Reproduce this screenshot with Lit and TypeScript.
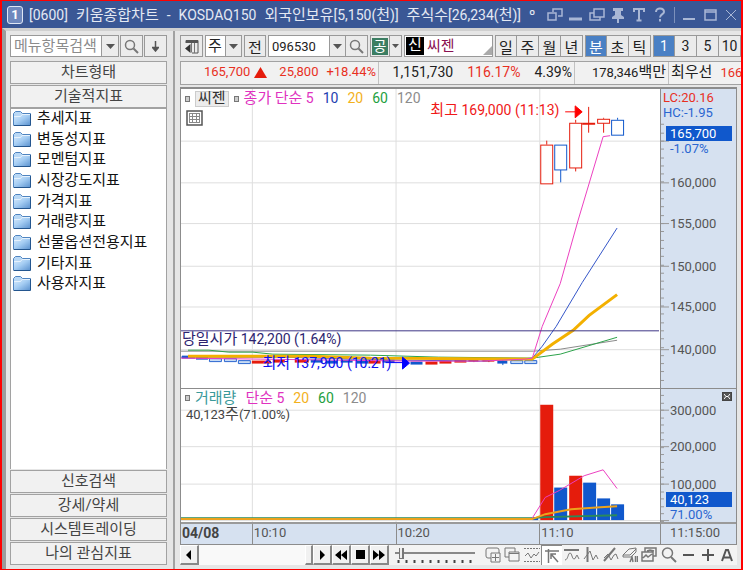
import { LitElement, html, svg, css } from "lit";
import { customElement } from "lit/decorators.js";
import { classMap } from "lit/directives/class-map.js";

/** Wraps runs of Hangul so they can be set larger than digits and Latin. */
const mix = (text: string) =>
  text
    .split(/([\uAC00-\uD7A3]+)/)
    .filter((t) => t)
    .map((t) => (/[\uAC00-\uD7A3]/.test(t) ? html`<span class="ko">${t}</span>` : t));

const shared = css`
  * { box-sizing: border-box; }
  button, input, select {
    font: inherit;
    color: inherit;
    margin: 0;
    padding: 0;
    border-radius: 0;
    appearance: none;
    outline: none;
  }
  button, select { cursor: pointer; }
  button { display: flex; align-items: center; justify-content: center; white-space: nowrap; }
  svg { display: block; flex: none; }
  .ko { font-size: 15px; }
`;

const arrow = html`<svg width="9" height="5" viewBox="0 0 9 5"><path d="M0 0h9L4.500 5z" fill="#555"/></svg>`;
const lens = html`<svg width="15" height="15" viewBox="0 0 15 15" fill="none" stroke="#777">
  <circle cx="6" cy="6" r="4.500" stroke-width="1.500"/><path d="M9.500 9.500L14 14" stroke-width="2"/></svg>`;

@customElement("title-bar")
class TitleBar extends LitElement {
  static styles = [shared, css`
    :host {
      display: flex; align-items: center; height: 27px; padding: 0 0 0 5px;
      background: #3a5795; color: #e4e9f3; overflow: hidden;
    }
    .badge {
      width: 16px; height: 18px; margin-right: 6px; flex: none;
      border: 1px solid #dfe6f4; border-radius: 3px; background: #6f88bd;
      color: #fff; font-weight: 700; font-size: 13px; line-height: 16px; text-align: center;
    }
    .title { display: flex; align-items: baseline; gap: 8px; flex: 1; white-space: nowrap; min-width: 0; overflow: hidden; font-size: 14px; line-height: 24px; }
    .tools { display: flex; flex: none; }
    .tools button { width: 21px; height: 22px; border: 0; background: none; color: #a9b7d5; }
    .rule { width: 1px; height: 16px; background: #7c90bb; margin: 3px 3px 0 4px; }
  `];
  render() {
    const parts = ["[0600]", "키움종합차트", "-", "KOSDAQ150", "외국인보유[5,150(천)]", "주식수[26,234(천)]", "º"];
    const tool = (label: string, art: unknown) => html`<button aria-label=${label}>
      <svg width="16" height="16" viewBox="0 0 16 16" fill="none" stroke="currentColor" stroke-width="1.500">${art}</svg></button>`;
    return html`
      <span class="badge">1</span>
      <div class="title">${parts.map((p) => html`<span>${mix(p)}</span>`)}</div>
      <div class="tools">
        ${tool("연결", svg`<path d="M6 5V2h9v7h-4M1 6h8v7H1z"/>`)}
        ${tool("내리기", svg`<path d="M1 12h13" stroke-width="3"/>`)}
        ${tool("복사", svg`<path d="M5 2h10v8H5zM5 6H1v7h10v-3"/>`)}
        ${tool("고정", svg`<path d="M3 1h10v3h-2v4l3 2v2H2v-2l3-2V4H3zM7 12h2v4H7z" fill="currentColor" stroke="none"/>`)}
        ${tool("글꼴", svg`<path d="M3 5V2h10v3M8 2v11M5.500 13.500h5" stroke-width="2"/>`)}
        ${tool("도움말", svg`<path d="M4 5c0-5 8-4.500 8 0 0 2-4 2.500-4 5.500M8 12v2.500" stroke-width="2"/>`)}
        <span class="rule"></span>
        ${tool("최소화", svg`<path d="M2 12h12" stroke-width="2"/>`)}
        ${tool("최대화", svg`<path d="M3 3h11v10H3zM3 5h11"/>`)}
        ${tool("닫기", svg`<path d="M3 3l10 10M13 3L3 13" stroke-width="1"/>`)}
      </div>`;
  }
}

@customElement("side-menu")
class SideMenu extends LitElement {
  static styles = [shared, css`
    :host { display: flex; flex-direction: column; gap: 1px; font-size: 15px; line-height: 20px; color: #444; }
    .search { display: flex; height: 22px; margin-bottom: 3px; flex: none; }
    .search input { flex: 1; min-width: 0; padding: 0 3px; border: 1px solid #999; background: #fff; }
    .search input::placeholder { color: #8c8c8c; opacity: 1; }
    .search button { background: #ececec; border: 1px solid #999; }
    .pick { width: 17px; border-left: 0 !important; }
    .find, .down { width: 23px; margin-left: 1px; }
    .head { height: 23px; flex: none; border: 1px solid #a2a2a2; background: #f1f1f1; padding-bottom: 1px; }
    .tree { flex: 1; min-height: 190px; margin: -1px 0 0; background: #fff; border: solid #a2a2a2; border-width: 1px 1px 0; }
    .rows { display: grid; grid-template-rows: repeat(9, minmax(0, 1fr)); height: 186px; margin: 0; padding: 0; list-style: none; }
    .rows a { display: flex; align-items: center; gap: 6px; padding-left: 2px; line-height: 19px; color: #111; text-decoration: none; white-space: nowrap; }
  `];
  render() {
    const items = ["추세지표", "변동성지표", "모멘텀지표", "시장강도지표", "가격지표", "거래량지표", "선물옵션전용지표", "기타지표", "사용자지표"];
    const folder = html`<svg width="18" height="17" viewBox="0 0 18 17">
      <defs><linearGradient id="g" x2="1" y2="1"><stop stop-color="#d4e8fb"/><stop offset=".45" stop-color="#a5cdf3"/><stop offset="1" stop-color="#5b92cf"/></linearGradient></defs>
      <path d="M.5 15V3.500L2.500 1.500h5l2 2H17.500v11" fill="#b9d8f5" stroke="#4f84c0"/>
      <path d="M1 15.500V7h6.500l1.500-2h8v10.500z" fill="url(#g)"/><path d="M1 6.500h6.500l1.500-2H17" fill="none" stroke="#e6f2fd"/><path d="M.5 15.500H17.500V4" fill="none" stroke="#24568f"/></svg>`;
    return html`
      <div class="search">
        <input type="text" placeholder="메뉴항목검색" aria-label="메뉴항목검색" />
        <button class="pick" aria-label="검색 목록">${arrow}</button>
        <button class="find" aria-label="검색">${lens}</button>
        <button class="down" aria-label="아래로"><svg width="7" height="11" viewBox="0 0 7 11"><path d="M3.500 0v8M.5 6.500L3.500 10l3-3.500z" fill="#555" stroke="#555" stroke-width="1.500"/></svg></button>
      </div>
      <button class="head">차트형태</button>
      <button class="head">기술적지표</button>
      <div class="tree"><ul class="rows">${items.map((t) => html`<li><a href="#">${folder}${t}</a></li>`)}</ul></div>
      ${["신호검색", "강세/약세", "시스템트레이딩", "나의 관심지표"].map((t) => html`<button class="head">${t}</button>`)}`;
  }
}

@customElement("chart-toolbar")
class ChartToolbar extends LitElement {
  static styles = [shared, css`
    :host { display: flex; gap: 2px; height: 22px; font-size: 14px; color: #222; overflow: hidden; }
    button, select, input, .name { height: 22px; border: 1px solid #999; background: #ebebeb; }
    .group { display: flex; flex: none; }
    .group > * + * { border-left: 0; }
    .icon { width: 23px; }
    select { width: 21px; padding-left: 2px; font-size: 15px; background: #fff; }
    .drop { width: 16px; }
    .prev { width: 22px; font-size: 15px; }
    input { width: 62px; padding-left: 3px; background: #fff; font-size: 13px; }
    .lens { width: 22px; }
    .pub { width: 20px; }
    .pub span { width: 16px; height: 17px; background: #3b7d62; color: #fff; font-size: 14px; line-height: 16px; }
    .slim { width: 12px; }
    .name { display: flex; align-items: center; flex: 1; min-width: 60px; padding-left: 1px; gap: 3px; background: #fff; color: #8a1050; font-size: 15px; overflow: hidden; }
    .name b { width: 18px; height: 18px; background: #000; color: #fff; font-weight: 400; line-height: 17px; text-align: center; flex: none; }
    .name span { line-height: 18px; }
    .name svg { margin: 8px 0 0 auto; }
    .tab { width: 22px; font-size: 15px; }
    .tab.num { font-size: 14px; }
    .on { background: #4a80c4; color: #fff; }
  `];
  render() {
    const tab = (t: string, on: boolean, num = false) =>
      html`<button class=${classMap({ tab: true, on, num })} aria-pressed=${on}>${t}</button>`;
    return html`
      <button class="icon" aria-label="메뉴 접기"><svg width="14" height="15" viewBox="0 0 14 15"><path d="M1 4V1.500h12v12.500H7" fill="none" stroke="#555"/><path d="M1 3h12" stroke="#555" stroke-width="2"/><path d="M6.500 4v9.500M9.500 4v10" stroke="#777"/><path d="M0 9.500L5.500 5v9z" fill="#333"/></svg></button>
      <div class="group"><select aria-label="종목 구분"><option>주</option></select><button class="drop" aria-label="구분 목록">${arrow}</button></div>
      <button class="prev">전</button>
      <div class="group"><input aria-label="종목코드" value="096530" /><button class="drop" aria-label="종목 목록">${arrow}</button><button class="lens" aria-label="종목 검색">${lens}</button></div>
      <div class="group"><button class="pub"><span>공</span></button><button class="slim" aria-label="공 목록"><svg width="7" height="4" viewBox="0 0 9 5"><path d="M0 0h9L4.500 5z" fill="#555"/></svg></button></div>
      <div class="name"><b>신</b><span>씨젠</span><svg width="9" height="9" viewBox="0 0 9 9"><path d="M9 0v9H0z" fill="#aaa"/></svg></div>
      <div class="group">${["일", "주", "월", "년"].map((t) => tab(t, false))}</div>
      <div class="group">${["분", "초", "틱"].map((t, i) => tab(t, i === 0))}</div>
      <div class="group">${["1", "3", "5", "10"].map((t, i) => tab(t, i === 0, true))}</div>`;
  }
}

@customElement("quote-strip")
class QuoteStrip extends LitElement {
  static styles = [shared, css`
    :host {
      display: grid; grid-template-columns: 198px 196px 94px 1fr; height: 22px;
      border: 1px solid #a2a2a2; border-right: 0; background: #f1f1f1;
      font-size: 13px; line-height: 20px; color: #222; white-space: nowrap; overflow: hidden;
    }
    .cell { display: flex; align-items: baseline; justify-content: flex-end; gap: 8px; padding-right: 2px; border-right: 1px solid #c2c2c2; }
    .cell.wide { gap: 14px; font-size: 14px; }
    .cell.last { justify-content: flex-start; border: 0; padding-left: 2px; min-width: 0; overflow: hidden; }
    .red { color: #e8301f; }
    .pair { display: flex; align-items: center; gap: 4px; margin-right: 4px; }
  `];
  render() {
    return html`
      <div class="cell red"><span class="pair">165,700<svg width="13" height="11" viewBox="0 0 13 11"><path d="M6.500 0L13 11H0z" fill="#e51c0c"/></svg></span><span>25,800</span><span>+18.44%</span></div>
      <div class="cell wide"><span>1,151,730</span><span class="red">116.17%</span><span>4.39%</span></div>
      <div class="cell"><span>${mix("178,346백만")}</span></div>
      <div class="cell last"><span>${mix("최우선")}</span><span class="red">166</span></div>`;
  }
}

type Pt = [number, number];
const path = (pts: Pt[]) => "M" + pts.map((p) => p.join(" ")).join("L");

/* Plot units: both panes are 480 wide; the price pane is 301 tall, the volume pane 135. */
const PRICE_H = 301;
const VOLUME_H = 135;
const VERTICALS = [72, 216, 360];
const PRICE_GRID: [number, string][] = [[52, ""], [94, "160,000"], [135, "155,000"], [178, "150,000"], [219, "145,000"], [262, "140,000"]];
const VOLUME_GRID: [number, string][] = [[21, "300,000"], [58, "200,000"], [96, "100,000"], [133, ""]];
const RED = "#e51c0c";
const BLUE = "#1058cc";
/* x, open/close top, bottom, high, low */
const CANDLES: [number, number, number, number, number, string][] = [
  [360, 56, 95, 52, 95, RED],
  [374, 56, 81, 56, 94, BLUE],
  [389, 34, 79, 31, 83, RED],
  [417, 30, 34, 29, 44, RED],
  [431, 31, 46, 29, 46, BLUE],
];
/* x, width, y of the flat candles before the jump */
const FLATS: [number, number, number, string][] = [
  [1, 13, 270, BLUE], [15, 12, 271, BLUE], [71, 19, 275, RED], [92, 12, 274, RED], [114, 14, 274, RED], [130, 12, 274, BLUE],
  [145, 12, 275, BLUE], [160, 12, 274, BLUE], [176, 12, 275, BLUE], [188, 12, 275, RED], [202, 12, 274, BLUE],
  [230, 12, 276, BLUE], [245, 12, 276, RED], [259, 12, 275, RED], [274, 12, 274, RED], [288, 10, 273, RED], [302, 12, 273, RED], [317, 10, 275, BLUE],
];
const AVERAGES: [Pt[], string, number][] = [
  [[[0, 264], [353, 264], [380, 262], [437, 253]], "#8a8a8a", 1],
  [[[7, 263], [28, 263], [48, 265], [72, 265], [92, 267], [190, 268], [258, 270], [352, 271], [380, 267], [437, 250]], "#2ba14a", 1],
  [[[0, 270], [100, 270], [220, 273], [300, 274], [340, 272], [352, 271], [362, 259], [376, 239], [402, 195], [437, 140]], "#3355c8", 1],
  [[[7, 269], [130, 269], [190, 271], [352, 272], [372, 257], [393, 243], [409, 228], [437, 207]], "#f3b000", 3],
  [[[0, 271], [80, 272], [230, 274], [300, 274], [345, 272], [352, 271], [362, 239], [380, 196], [398, 132], [423, 48], [430, 47]], "#ec3fc0", 1],
];
const BARS: [number, number, number, string][] = [
  [352, 6, 131, BLUE], [360, 13, 16, RED], [374, 13, 100, BLUE], [389, 13, 88, RED], [403, 13, 95, BLUE], [417, 13, 111, BLUE], [431, 13, 117, BLUE],
];
const VOLUME_AVERAGES: [Pt[], string, number][] = [
  [[[0, 131], [352, 131], [365, 130], [437, 128]], "#2b8a5a", 2],
  [[[0, 132], [352, 132], [365, 127], [391, 122], [420, 120], [437, 119]], "#eca21c", 2],
  [[[352, 131], [365, 110], [379, 103], [404, 88], [423, 82], [437, 101]], "#ec3fc0", 1],
];
const PRICE_LEGEND = [["종가 단순 5", "pink"], ["10", "blue"], ["20", "gold"], ["60", "green"], ["120", "gray"]];
const VOLUME_LEGEND = [["거래량", "teal"], ["단순 5", "pink"], ["20", "gold"], ["60", "green"], ["120", "gray"]];

@customElement("stock-chart")
class StockChart extends LitElement {
  static styles = [shared, css`
    :host {
      display: grid; grid-template: 301fr 135fr 22px / minmax(0, 1fr) 76px;
      border: 1px solid #8c8c8c; border-top-width: 2px; background: #fff;
      font-size: 13px; line-height: 15px; color: #555; min-height: 0;
    }
    .pane { position: relative; min-height: 0; overflow: hidden; }
    .pane > svg { position: absolute; inset: 0; width: 100%; height: 100%; }
    .axis { position: relative; background: #d6e1f0; border-left: 1px solid #8c8c8c; overflow: hidden; }
    .axis > svg { width: 10px; height: 100%; position: absolute; left: 0; top: 0; }
    .volume { border-top: 1px solid #8c8c8c; }
    .legend { position: relative; display: flex; align-items: center; gap: 9px; padding: 2px 4px 0; height: 17px; font-size: 14px; white-space: nowrap; }
    .mark { width: 5px; height: 6px; border: 1px solid #777; background: #ccc; margin-right: -4px; }
    .chip { background: #ececec; border: 1px solid #ccc; color: #333; padding: 0 2px; height: 16px; margin-right: -4px; line-height: 13px; }
    .pink { color: #e032c0; } .blue { color: #2440b0; } .gold { color: #f3b11c; }
    .green { color: #1da040; } .gray { color: #8c8c8c; } .teal { color: #3a9a9a; }
    .note { position: absolute; white-space: nowrap; transform: translateY(-50%); font-size: 14px; }
    .high { top: 7%; right: 21%; color: #f01818; }
    .open { top: 83.700%; left: 1px; color: #2c2470; }
    .lowest { top: 91.700%; left: 17%; color: #1010f0; }
    .now { position: relative; padding-left: 5px; color: #444; line-height: 16px; }
    .tick { position: absolute; left: 9px; transform: translateY(-50%); }
    .span { position: absolute; top: 1px; left: 2px; }
    .up { color: #e8301f; } .down { color: #2a66d0; }
    .last { position: absolute; left: 5px; right: 4px; }
    .last b { display: block; background: #1058cc; color: #fff; font-weight: 400; padding-left: 4px; }
    .last span { color: #2a66d0; padding-left: 4px; }
    .close { position: absolute; right: 4px; top: 3px; width: 10px; height: 9px; border: 1px solid #444; background: #555; color: #fff; }
    .times { grid-column: 1 / -1; display: grid; grid-template-columns: 71fr 144fr 144fr 121fr 76px; background: #d6e1f0; border-top: 2px solid #9a9a9a; line-height: 18px; }
    .times span { padding-left: 1px; border-left: 1px solid #8c8c8c; }
    .times span:first-child { border: 0; font-weight: 700; color: #444; font-size: 14px; }
    .times span:last-child { padding-left: 9px; }
  `];
  legend(items: string[][]) {
    return items.map(([t, c]) => html`<span class=${c}>${mix(t)}</span>`);
  }
  grid(rows: [number, string][], height: number) {
    return svg`<path d=${rows.map(([y]) => `M0 ${y + 0.5}H480`).join("") + VERTICALS.map((x) => `M${x - 0.5} 0V${height}`).join("")} stroke="#dedede" fill="none"/>`;
  }
  lines(list: [Pt[], string, number][]) {
    return list.map(([p, c, w]) => svg`<path d=${path(p)} fill="none" stroke=${c} stroke-width=${w}/>`);
  }
  ticks(rows: [number, string][], height: number, step: number, from: number) {
    let d = "";
    for (const [y] of rows) d += `M0 ${y + 0.5}H8`;
    for (let y = rows[0][0] % step; y < height; y += step) if (y > from) d += `M0 ${Math.round(y) + 0.5}H3`;
    return html`<svg viewBox="0 0 10 ${height}" preserveAspectRatio="none"><path d=${d} stroke="#999" fill="none"/></svg>`;
  }
  labels(rows: [number, string][], height: number) {
    return rows.filter(([, t]) => t).map(([y, t]) => html`<span class="tick" style="top:${(y / height) * 100}%">${t}</span>`);
  }
  render() {
    return html`
      <div class="pane">
        <svg viewBox="0 0 480 ${PRICE_H}" preserveAspectRatio="none">
          ${this.grid(PRICE_GRID, PRICE_H)}
          ${FLATS.map(([x, w, y, c]) => svg`<path d="M${x} ${y}h${w}" stroke=${c} stroke-width="3"/>`)}
          ${[[28, 273], [43, 273], [57, 275], [330, 275], [344, 275]].map(([x, y]) => svg`<path d="M${x + 0.5} ${y - 1.5}h12v3h-12z" fill="#c8dcf4" stroke="#2a66d0"/>`)}
          <path d="M293.500 271v4M308.500 271v4" stroke="${RED}"/><path d="M322.500 272v6" stroke="${BLUE}"/>
          ${this.lines(AVERAGES)}
          <path d="M0 243.500H479" stroke="#3c3484"/>
          ${CANDLES.map(([x, t, b, h, l, c]) => svg`<path d="M${x + 6.5} ${h}V${t}M${x + 6.5} ${b}V${l}" stroke=${c}/><rect x=${x + 0.5} y=${t + 0.5} width="12" height=${b - t} fill="#fff" stroke=${c}/>`)}
          <path d="M402 35h13" stroke="${RED}" stroke-width="2"/><path d="M408.500 18v26" stroke="${RED}"/>
          <path d="M385 23h12M395 17l7 6-7 6z" stroke="#f00" fill="#f00"/>
          <path d="M205 275.500h18M222 270l7 6-7 6z" stroke="#00f" fill="#00f"/>
        </svg>
        <div class="legend"><i class="mark"></i><span class="chip">${mix("씨젠")}</span><i class="mark"></i>${this.legend(PRICE_LEGEND)}</div>
        <table-icon></table-icon>
        <span class="note high">${mix("최고 169,000 (11:13)")}</span>
        <span class="note open">${mix("당일시가 142,200 (1.64%)")}</span>
        <span class="note lowest">${mix("최저 137,900 (10:21)")}</span>
      </div>
      <div class="axis">
        ${this.ticks(PRICE_GRID, PRICE_H, 8.3, 30)}
        <div class="span"><div class="up">LC:20.16</div><div class="down">HC:-1.95</div></div>
        ${this.labels(PRICE_GRID, PRICE_H)}
        <div class="last" style="top:${(37 / PRICE_H) * 100}%"><b>165,700</b><span>-1.07%</span></div>
      </div>
      <div class="pane volume">
        <svg viewBox="0 0 480 ${VOLUME_H}" preserveAspectRatio="none">
          ${this.grid(VOLUME_GRID, VOLUME_H)}
          ${BARS.map(([x, w, y, c]) => svg`<rect x=${x} y=${y} width=${w} height=${133 - y} fill=${c}/>`)}
          ${this.lines(VOLUME_AVERAGES)}
        </svg>
        <div class="legend"><i class="mark"></i>${this.legend(VOLUME_LEGEND)}</div>
        <div class="now">${mix("40,123주(71.00%)")}</div>
      </div>
      <div class="axis volume">
        ${this.ticks(VOLUME_GRID, VOLUME_H, 7.5, 0)}
        ${this.labels(VOLUME_GRID, VOLUME_H)}
        <div class="last" style="top:${(105 / VOLUME_H) * 100}%"><b>40,123</b><span>71.00%</span></div>
        <button class="close" aria-label="닫기"><svg width="6" height="5" viewBox="0 0 6 5"><path d="M0 0l2 2.500L0 5M6 0L4 2.500 6 5M2 2.500h2" stroke="#fff" fill="none"/></svg></button>
      </div>
      <div class="times"><span>04/08</span><span>10:10</span><span>10:20</span><span>11:10</span><span>11:15:00</span></div>`;
  }
}

@customElement("table-icon")
class TableIcon extends LitElement {
  static styles = css`:host { display: block; position: relative; margin: 4px 0 0 5px; width: 17px; } svg { display: block; }`;
  render() {
    return html`<svg width="17" height="16" viewBox="0 0 17 16"><path d="M1 1h15v14H1z" fill="#fff" stroke="#555" stroke-width="1.500"/><path d="M3 3.500h11M3 6.500h11M3 9.500h11M3 12.500h11M3.500 3v10M6.500 3v10M10.500 3v10M13.500 3v10" stroke="#888"/></svg>`;
  }
}

@customElement("play-bar")
class PlayBar extends LitElement {
  static styles = [shared, css`
    :host { display: flex; align-items: center; height: 20px; background: #f3f3f3; overflow: hidden; }
    .bevel { height: 20px; width: 19px; border: 1px solid; border-color: #fff #888 #888 #fff; border-right-width: 2px; border-bottom-width: 2px; background: #f1f1f1; flex: none; }
    .bevel.end { width: 8px; }
    .track { flex: 1; min-width: 20px; align-self: stretch; background: #f9f9f9; }
    .speed { width: 80px; margin: 0 8px 0 6px; flex: none; }
    .speed input { display: block; width: 80px; height: 12px; background: linear-gradient(#888, #888) 0 4px / 100% 2px no-repeat; }
    .speed input::-webkit-slider-thumb { appearance: none; width: 5px; height: 11px; margin-left: 4px; border: 1px solid #777; border-width: 0 2px 1px 1px; background: #eee; }
    .tools { display: flex; flex: none; width: 254px; }
    .tools button { flex: 1; height: 20px; border: 0; background: none; color: #777; }
    .tools button:nth-child(4) { background: #fff; border-left: 1px solid #888; border-top: 1px solid #888; }
  `];
  render() {
    const btn = (label: string, d: string) => html`<button class="bevel" aria-label=${label}><svg width="14" height="12" viewBox="0 0 14 12"><path d=${d}/></svg></button>`;
    const tools: [string, unknown][] = [
      ["추가", svg`<path d="M14 6V3q0-2-2-2H3q-2 0-2 2v6q0 2 2 2h3M6 6h9v9H6zM10.500 7v7M7 10.500h7"/>`],
      ["창", svg`<path d="M5 10H1V1h10v4M5 5h10v9H5zM5 6.500h10"/>`],
      ["범위", svg`<path d="M0 1.500h16M0 14.500h16" stroke-dasharray="2 1"/><path d="M1 9l3-3 3 5 3-4 2 2 3-4"/>`],
      ["추세선", svg`<path d="M1 3h14M4.500 1v14" stroke-width="1.500"/><path d="M14 14L7 6M7 11V6h5" stroke-width="1.500"/>`],
      ["수평선", svg`<path d="M0 3h15" stroke-width="2"/><path d="M1 13c3 0 3-7 5-7s2 6 4 6 2-4 3-4l2 4"/>`],
      ["수직선", svg`<path d="M4.500 0v15" stroke-width="2"/><path d="M1 12l3-4 3-4 3 9 3-5 2 4"/>`],
      ["사선", svg`<path d="M1 14L12 1" stroke-width="2"/><path d="M1 11l4-4 3 6 3-5 2-1 2 5"/>`],
      ["모두 지우기", svg`<path d="M1 8l6-6 7-1v4l-5 5H1zM1 8h7l6-6"/><path d="M8 15l2-5 1 5M13.500 9v6M15.500 9v6" stroke-width="1.500"/>`],
      ["겹치기", svg`<path d="M4 5V1h11v8h-3M1 5h11v9H1zM2 11l3-3 2 2 4-3M6 4l3-1 4 1" stroke-width="1.500"/>`],
      ["확대경", svg`<circle cx="6.500" cy="6" r="5" stroke-width="1.500"/><path d="M10 10l5 5" stroke-width="2"/>`],
      ["축소", svg`<path d="M3 8h11" stroke="#555" stroke-width="2"/>`],
      ["확대", svg`<path d="M2 8h12M8 2v12" stroke="#555" stroke-width="2"/>`],
      ["글자", svg`<path d="M3 14L7 3h2l4 11M5 10.500h6" stroke="#555" stroke-width="2"/>`],
    ];
    return html`
      ${btn("이전", "M9 1v10L4 6z")}
      <div class="track"></div><span class="bevel end"></span>
      ${btn("재생", "M5 1v10l5-5z")}${btn("뒤로", "M7 1v10L1 6zM13 1v10L7 6z")}${btn("정지", "M3 1h9v9H3z")}${btn("앞으로", "M1 1v10l6-5zM7 1v10l6-5z")}
      <div class="speed"><input type="range" min="0" max="10" value="0" aria-label="재생 속도" />
        <svg width="80" height="3" viewBox="0 0 80 3"><path d="M2.500 1.500h77" stroke="#444" stroke-width="3" stroke-dasharray="2 6"/></svg></div>
      <div class="tools">${tools.map(([l, a]) => html`<button aria-label=${l}><svg width="16" height="16" viewBox="0 0 16 16" fill="none" stroke="currentColor">${a}</svg></button>`)}</div>`;
  }
}

@customElement("app-root")
class AppRoot extends LitElement {
  static styles = css`
    :host {
      display: flex; flex-direction: column; box-sizing: border-box; height: 100vh; min-height: 480px; overflow: hidden;
      border: 2px solid #f00; border-top-width: 1px; border-bottom-width: 1px; background: #e6e6e6;
      font-family: Roboto, "Noto Sans CJK KR", sans-serif;
    }
    .body { flex: 1; display: grid; grid-template-columns: 164px 7px minmax(0, 1fr); min-height: 0; border-left: 4px solid #9c9c9c; border-top: 3px solid #d0d0d0; }
    side-menu { padding: 4px 0 4px 4px; width: 161px; box-sizing: border-box; }
    .split { border-left: 2px solid #a2a2a2; background: #e6e6e6; margin-left: 3px; }
    .main { display: flex; flex-direction: column; padding: 4px 0 4px 3px; min-width: 0; min-height: 0; }
    quote-strip { margin: 4px 0 2px; flex: none; }
    chart-toolbar { flex: none; }
    stock-chart { flex: 1; margin-right: 4px; }
    play-bar { flex: none; margin-right: 4px; }
  `;
  render() {
    return html`
      <title-bar></title-bar>
      <div class="body">
        <side-menu></side-menu>
        <div class="split"></div>
        <div class="main">
          <chart-toolbar></chart-toolbar>
          <quote-strip></quote-strip>
          <stock-chart></stock-chart>
          <play-bar></play-bar>
        </div>
      </div>`;
  }
}
